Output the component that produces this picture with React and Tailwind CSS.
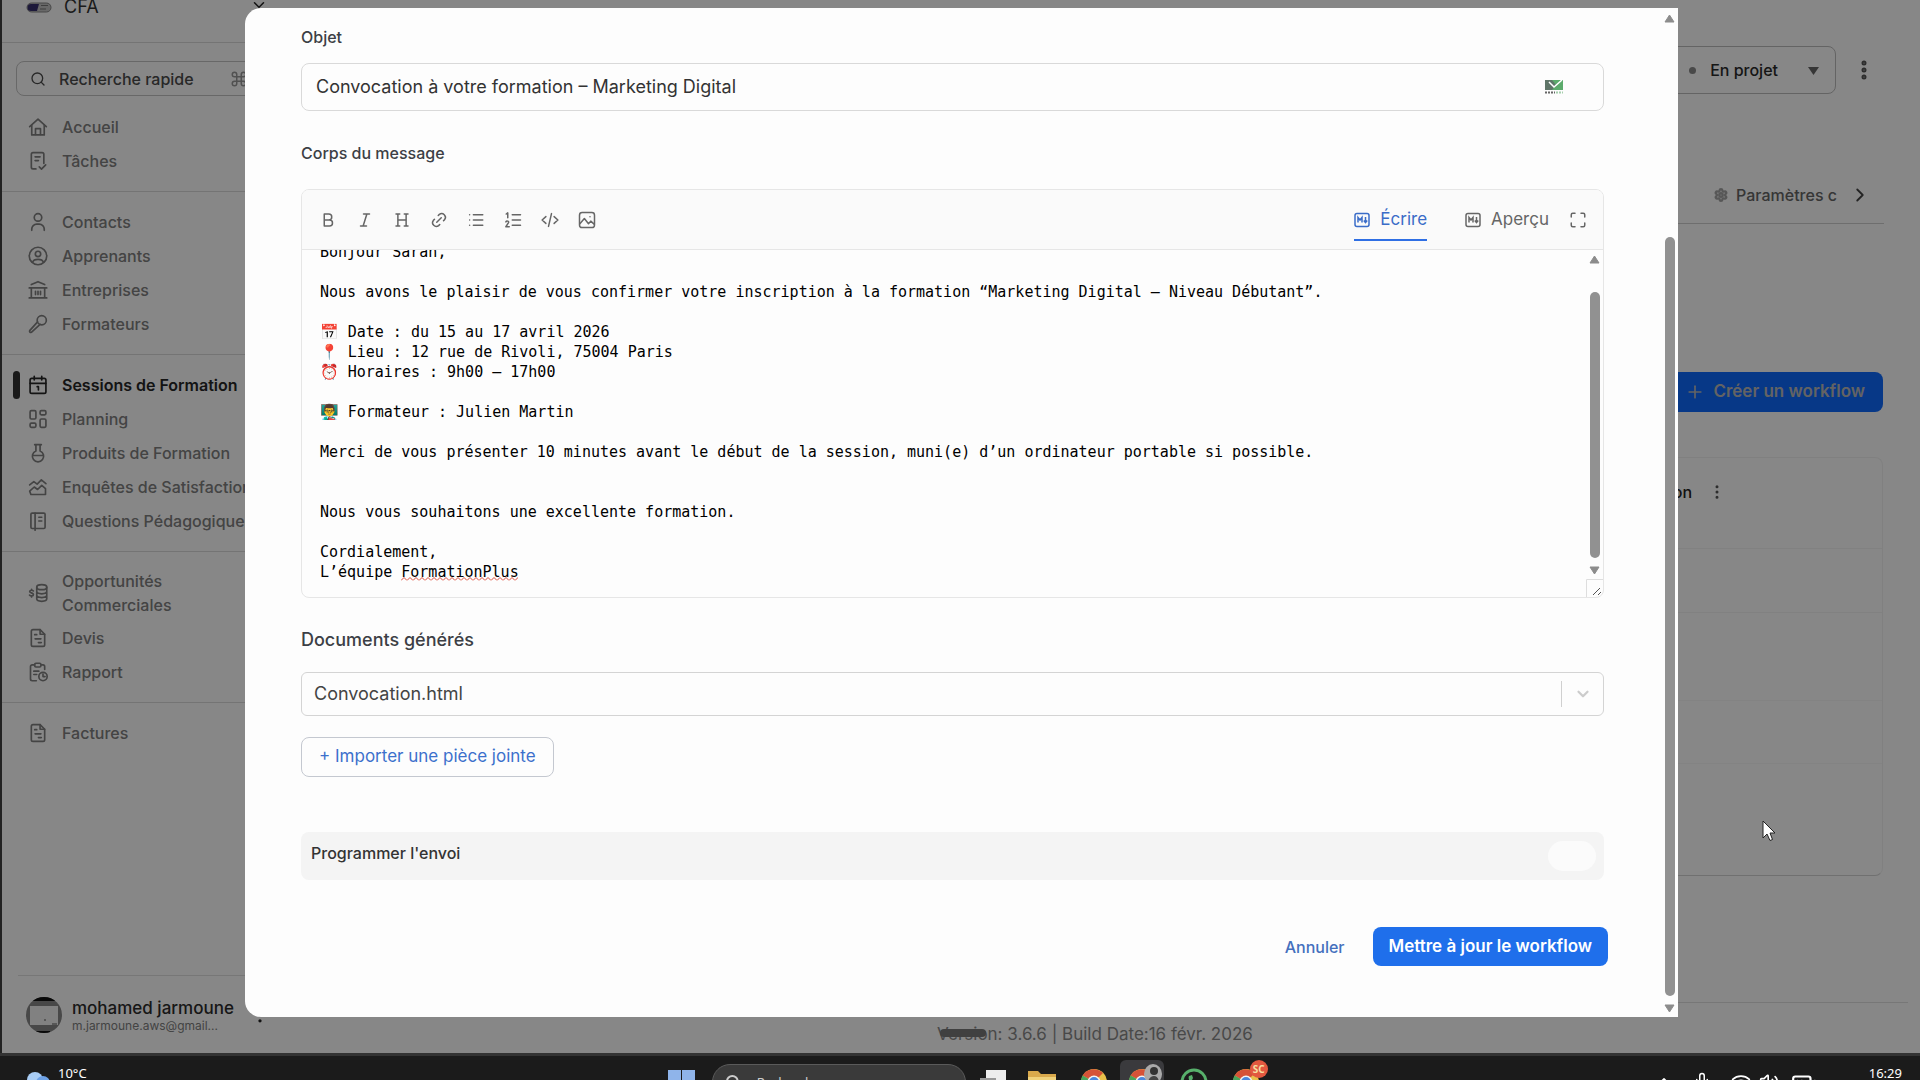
import { useLayoutEffect, useRef } from "react";
import {
  Search, Command, ChevronDown, ChevronRight, EllipsisVertical, Plus, Settings,
  Maximize, Mic, Wifi, Volume2, BatteryMedium, ChevronUp,
} from "lucide-react";

/* ---------- sidebar icons ---------- */

function Icon({ children, size = 20, stroke = 2 }) {
  return (
    <svg width={size} height={size} viewBox="0 0 24 24" fill="none" stroke="currentColor" strokeWidth={stroke} strokeLinecap="round" strokeLinejoin="round" aria-hidden="true">
      {children}
    </svg>
  );
}

const HomeIcon = () => (
  <Icon>
    <path d="M2 11.5 12 2.5l10 9" />
    <path d="M4.5 10v11.5h15V10" />
    <path d="M9 21v-7h6v7" />
  </Icon>
);
const TaskIcon = () => (
  <Icon>
    <path d="M9.5 21.5H6a2 2 0 0 1-2-2V4a2 2 0 0 1 2-2h11a2 2 0 0 1 2 2v11" />
    <path d="M8.5 7h6M8.5 11.5h4M13.5 19l2.7 2.7 5-5" />
  </Icon>
);
const ContactIcon = () => (
  <Icon>
    <circle cx="12" cy="6.5" r="4.5" />
    <path d="M4.5 22v-1.5a6 6 0 0 1 6-6h3a6 6 0 0 1 6 6V22" />
  </Icon>
);
const LearnerIcon = () => (
  <Icon>
    <circle cx="12" cy="12" r="10.5" />
    <circle cx="12" cy="9.5" r="3.2" />
    <path d="M5.5 19.5c1-3 3.5-3.5 6.5-3.5s5.5.5 6.500 3.5" />
  </Icon>
);
const CompanyIcon = () => (
  <Icon>
    <path d="M4 5.5 12 2l8 3.5" />
    <path d="M1.5 9.5h21M4 9.5v12h16v-12M1.5 21.5h21M9 13.5v4M12 13.5v4M15 13.5v4" />
  </Icon>
);
const MicIcon = () => (
  <Icon>
    <circle cx="16.5" cy="7.5" r="5.5" />
    <path d="M11.5 9.5 2 20a1.5 1.5 0 0 0 2 2l10.5-9.5" />
  </Icon>
);
const SessionIcon = () => (
  <Icon>
    <rect x="2.5" y="4" width="19" height="18" rx="2" />
    <path d="M2.5 10h19M7.5 1.5V6M16.5 1.5V6M11 14h1.5v4" />
  </Icon>
);
const PlanningIcon = () => (
  <Icon>
    <rect x="2.5" y="2" width="7" height="10" rx="1.5" />
    <rect x="14.5" y="2" width="7" height="5" rx="1.5" />
    <rect x="14.5" y="12" width="7" height="10" rx="1.5" />
    <rect x="2.5" y="17" width="7" height="5" rx="1.5" />
  </Icon>
);
const FlaskIcon = () => (
  <Icon>
    <path d="M8 2h8M9.5 2v7.5a6.8 6.8 0 1 0 5 0V2M5.5 15h13" />
  </Icon>
);
const SurveyIcon = () => (
  <Icon>
    <path d="m2 9.5 5-4 4 3 5-5 5.5 4.5" />
    <path d="m2 17 5.5-5 4 3 5-5 4.5 4v7H3.5z" />
  </Icon>
);
const BookIcon = () => (
  <Icon>
    <rect x="3.5" y="2.5" width="17" height="18.5" rx="1.5" />
    <path d="M8.5 2.5V23M13 7.5h3.5M13 12h3.5" />
  </Icon>
);
const MoneyIcon = () => (
  <Icon>
    <path d="M6.5 9.5c-1-1.2-4.5-1.2-4.5.8s4.5 1.2 4.5 3.5-3.5 2.2-4.7.7M4.3 7.5v1.2M4.3 15.5v1.2" />
    <ellipse cx="16.5" cy="5" rx="6" ry="3" />
    <path d="M10.5 5v14c0 1.7 2.7 3 6 3s6-1.3 6-3V5M10.5 10c0 1.7 2.7 3 6 3s6-1.3 6-3M10.5 14.5c0 1.7 2.7 3 6 3s6-1.3 6-3" />
  </Icon>
);
const InvoiceIcon = () => (
  <Icon>
    <path d="M14.5 2H6a2 2 0 0 0-2 2v16a2 2 0 0 0 2 2h12a2 2 0 0 0 2-2V7.5z" />
    <path d="M14.5 2v5.5H20M8 8h2.5M8.5 13h7M12.5 17.5h3.5" />
  </Icon>
);
const ReportIcon = () => (
  <Icon>
    <path d="M8 3.5H5a2 2 0 0 0-2 2v15a2 2 0 0 0 2 2h5M16 3.5h2a2 2 0 0 1 2 2V9" />
    <rect x="8" y="1.5" width="7.5" height="4.5" rx="1.5" />
    <path d="M7 11h6M7 15h3.5" />
    <circle cx="18" cy="17.5" r="5" />
    <path d="M18 14.5v3h2.5" />
  </Icon>
);

const NAV = [
  [["Accueil", HomeIcon], ["Tâches", TaskIcon]],
  [["Contacts", ContactIcon], ["Apprenants", LearnerIcon], ["Entreprises", CompanyIcon], ["Formateurs", MicIcon]],
  [["Sessions de Formation", SessionIcon], ["Planning", PlanningIcon], ["Produits de Formation", FlaskIcon], ["Enquêtes de Satisfaction", SurveyIcon], ["Questions Pédagogiques", BookIcon]],
  [["Opportunités Commerciales", MoneyIcon], ["Devis", InvoiceIcon], ["Rapport", ReportIcon]],
  [["Factures", InvoiceIcon]],
];

function NavItem({ label, Glyph }) {
  const active = label === "Sessions de Formation";
  const tall = label === "Opportunités Commerciales";
  return (
    <a href="#" aria-current={active ? "page" : undefined} className={"relative flex items-center pl-[26px] " + (tall ? "h-14 " : "h-[34px] ") + (active ? "font-semibold text-[#262626]" : "font-medium text-[#808080]")}>
      {active && <span className="absolute left-[11px] h-7 w-[7px] rounded-full bg-[#303030]" />}
      <span className="w-[34px] shrink-0"><Glyph /></span>
      <span className={tall ? "w-32 leading-6" : "whitespace-nowrap"}>{label}</span>
    </a>
  );
}

function Sidebar() {
  return (
    <aside className="flex w-[280px] shrink-0 flex-col overflow-hidden text-base text-[#808080]">
      <div className="flex h-[43px] shrink-0 items-start border-b border-[#dcdcdc] pl-6">
        <svg width="26" height="12" viewBox="0 0 26 12" className="mt-0.5" aria-hidden="true">
          <rect x="1" y="1" width="24" height="9" rx="4.5" fill="#c4c4c4" stroke="#888" />
          <path d="M5 2h8l-2 7H5a3.5 3.5 0 0 1 0-7z" fill="#38306e" />
          <path d="M15 3.5h7M14 7h6" stroke="#777" />
        </svg>
        <span className="-mt-[5px] ml-3 flex-1 text-lg leading-6 text-[#333]">CFA</span>
        <ChevronDown size={18} className="-mt-1 mr-3.5 text-[#222]" />
      </div>
      <button type="button" className="mx-3.5 mt-[18px] flex h-[35px] shrink-0 items-center rounded-lg border border-[#c4c4c4] pl-[13px] font-medium text-[#4c4c4c]">
        <Search size={16} />
        <span className="ml-[13px] flex-1 text-left">Recherche rapide</span>
        <Command size={18} className="mr-1 text-[#999]" /><span className="mr-1 text-[#999]">K</span>
      </button>
      <nav className="pt-px">
        {NAV.map((items, i) => (
          <div key={i} className="border-b border-[#dcdcdc] py-[13px] last:border-0">
            {items.map(([label, Glyph]) => <NavItem key={label} label={label} Glyph={Glyph} />)}
          </div>
        ))}
      </nav>
      <div className="mx-4 mt-auto flex h-[78px] shrink-0 items-center border-t border-[#e0e0e0] pl-2">
        <svg width="36" height="36" viewBox="0 0 36 36" aria-hidden="true">
          <clipPath id="avatar"><circle cx="18" cy="18" r="18" /></clipPath>
          <g clipPath="url(#avatar)">
            <rect width="36" height="36" fill="#888" />
            <path d="M0 0h36v4H0zM10 34h14v2H10z" fill="#111" />
            <path d="M4 9h28v19H4z" fill="#f4f4f4" />
            <path d="M26 27h5M18 23h2" stroke="#555" />
          </g>
        </svg>
        <span className="ml-2.5 flex flex-1 flex-col pt-0.5">
          <span className="text-[17px] leading-5 font-medium text-[#2c2c2c]">mohamed jarmoune</span>
          <span className="text-xs leading-4">m.jarmoune.aws@gmail...</span>
        </span>
        <EllipsisVertical size={20} className="-mr-1 text-[#222]" />
      </div>
    </aside>
  );
}

/* ---------- page behind the dialog ---------- */

function Page() {
  return (
    <main className="flex min-w-0 flex-1 flex-col text-base">
      <div className="flex items-center justify-end pt-[46px] pr-11">
        <button type="button" className="flex h-12 w-64 items-center rounded-lg border border-[#bdbdbd] pr-4 font-medium text-[#2a2a2a]">
          <span className="ml-auto size-[7px] rounded-full bg-[#8a8a8a]" />
          <span className="ml-3.5">En projet</span>
          <svg width="11" height="8" viewBox="0 0 11 8" className="mt-0.5 ml-[30px]" fill="#666" aria-hidden="true"><path d="M0 0h11L5.5 8z" /></svg>
        </button>
        <button type="button" aria-label="Plus d'actions" className="ml-4 text-[#555]"><EllipsisVertical size={24} strokeWidth={3} /></button>
      </div>
      <div className="mt-[73px] mr-9 flex h-[57px] items-center justify-end border-b border-[#d0d0d0] pr-[13px] font-medium text-[#666]">
        <Settings size={14} className="text-[#a5a5a5]" strokeWidth={4} />
        <span className="ml-2 whitespace-nowrap">Paramètres c</span>
        <ChevronRight size={22} strokeWidth={2} className="ml-3 text-[#444]" />
      </div>
      <button type="button" className="mt-[148px] mr-[37px] flex h-10 items-center self-end rounded-lg bg-[#0f6bff] pr-[18px] pl-5 text-[17px] font-semibold text-[#bbb]">
        <Plus size={20} strokeWidth={2} />
        <span className="ml-2">Créer un workflow</span>
      </button>
      <section className="mt-[45px] mr-[37px] ml-8 h-[419px] rounded-lg border border-[#f2f2f2] border-b-[#d4d4d4]">
        <div className="flex h-[67px] items-center justify-end pr-[156px]">
          <span className="font-medium text-[#222]">Action</span>
          <EllipsisVertical size={18} strokeWidth={2} className="ml-4 text-[#555]" />
        </div>
        <div className="h-[24px] border-b border-[#f4f4f4]" />
        <div className="h-[64px] border-b border-[#f4f4f4]" />
        <div className="h-[88px] border-b border-[#f8f8f8]" />
        <div className="h-[63px] border-b border-[#f8f8f8]" />
      </section>
      <footer className="mt-auto mr-3 h-[51px] border-t border-[#e0e0e0] pt-[19px] text-center text-[17px] leading-6 text-[#8a8a8a]">
        <span>Version: 3.6.6 | Build Date:16 févr. 2026</span>
      </footer>
    </main>
  );
}

/* ---------- message editor ---------- */

const MESSAGE = `Bonjour Sarah,

Nous avons le plaisir de vous confirmer votre inscription à la formation “Marketing Digital – Niveau Débutant”.

📅 Date : du 15 au 17 avril 2026
📍 Lieu : 12 rue de Rivoli, 75004 Paris
⏰ Horaires : 9h00 – 17h00

👨‍🏫 Formateur : Julien Martin

Merci de vous présenter 10 minutes avant le début de la session, muni(e) d’un ordinateur portable si possible.


Nous vous souhaitons une excellente formation.

Cordialement,
L’équipe FormationPlus`;

const TOOLS = [
  ["Gras", <path key="a" d="M7 4h6a4 4 0 0 1 0 8H7zm0 8h7a4 4 0 0 1 0 8H7z" />],
  ["Italique", <path key="a" d="M10 4h8M6 20h8M14.5 4l-5 16" />],
  ["Titre", <path key="a" d="M6.5 4v16M17.5 4v16M6.5 12h11M4 4h5M15 4h5M4 20h5M15 20h5" />],
  ["Lien", <path key="a" d="m9 15 6-6M11 6l1.5-1.5a5 5 0 0 1 7 7L18 13M6 11l-1.5 1.5a5 5 0 0 0 7 7L13 18" />],
  ["Liste à puces", <path key="a" d="M8.5 5H21M8.5 12H21M8.5 19H21M3.5 5h.01M3.5 12h.01M3.5 19h.01" />],
  ["Liste numérotée", <path key="a" d="M11 5h11M11 12h11M11 19h11M3 4l2-1.5V9M2.5 14.5c1-2 4.5-1 3.5 1L2.5 21H7" />],
  ["Code", <path key="a" d="m6.5 7.5-5 4.5 5 4.5M17.5 7.5l5 4.5-5 4.5M14 3.5l-4 17" />],
  ["Image", <g key="a"><rect x="2" y="2" width="20" height="20" rx="3.5" /><path d="m2.5 17 6-7 5.5 7 3-3.5 4.5 4M16 7.5h.01" /></g>],
];

const MarkdownIcon = () => (
  <svg width="16" height="16" viewBox="0 0 16 16" fill="none" stroke="currentColor" strokeWidth="1.5" aria-hidden="true">
    <rect x="1" y="1.5" width="14" height="13" rx="2" />
    <path d="M4 10.5v-5l2 2.5 2-2.5v5M11.5 5v5M9.8 8.5l1.7 2 1.7-2" />
  </svg>
);

function Arrow({ down }) {
  return (
    <svg width="11" height="9" viewBox="0 0 11 9" fill="#8c8c8c" stroke="#8c8c8c" strokeLinejoin="round" className="shrink-0" aria-hidden="true">
      <path d={down ? "M1 1h9L5.5 8z" : "M1 8h9L5.5 1z"} />
    </svg>
  );
}

function Editor() {
  const area = useRef(null);
  useLayoutEffect(() => {
    area.current.scrollTop = area.current.scrollHeight;
  }, []);
  return (
    <div className="mt-[26px] overflow-hidden rounded-lg border border-[#e6e6e6]">
      <div className="flex h-[60px] items-center border-b border-[#e6e6e6] bg-[#fafafa] px-4 text-[#666]">
        <div className="flex gap-[17px]">
          {TOOLS.map(([label, shape]) => (
            <button key={label} type="button" aria-label={label} className="flex size-5 items-center justify-center"><Icon size={18}>{shape}</Icon></button>
          ))}
        </div>
        <div className="ml-auto flex items-center text-[17px]">
          <button type="button" className="flex h-[42px] items-center gap-2.5 border-b-2 border-[#2f6fe4] pt-0.5 text-[#3a6cc8]"><MarkdownIcon />Écrire</button>
          <button type="button" className="ml-[38px] flex h-[42px] items-center gap-2.5 border-b-2 border-transparent pt-0.5"><MarkdownIcon />Aperçu</button>
          <button type="button" aria-label="Plein écran" className="ml-5"><Maximize size={18} /></button>
        </div>
      </div>
      <div className="relative flex h-[347px]">
        <textarea
          ref={area}
          aria-labelledby="body-label"
          spellCheck={false}
          defaultValue={MESSAGE}
          className="h-full flex-1 resize-none overflow-hidden bg-transparent px-[18px] pt-4 pb-[15px] font-['DejaVu_Sans_Mono','Noto_Color_Emoji',monospace] text-[15px] leading-5 text-black outline-none"
        />
        <svg width="117" height="4" className="absolute bottom-4 left-[99px]" aria-hidden="true">
          <defs><pattern id="wave" width="6" height="4" patternUnits="userSpaceOnUse"><path d="M0 3.5 3 .5l3 3" fill="none" stroke="#dc4a38" /></pattern></defs>
          <rect width="117" height="4" fill="url(#wave)" />
        </svg>
        <div className="flex w-[17px] flex-col items-center pt-[5px]">
          <Arrow />
          <div className="mt-7 w-2.5 flex-1 rounded-full bg-[#919191]" />
          <div className="mt-2 flex"><Arrow down /></div>
          <svg width="17" height="18" viewBox="0 0 17 18" className="mt-1 shrink-0" fill="none" aria-hidden="true">
            <path d="M.5 18V.5H17" stroke="#dedede" />
            <path d="m7 16 7-7M12 16l3-3" stroke="#555" />
          </svg>
        </div>
      </div>
    </div>
  );
}

/* ---------- dialog ---------- */

function Dialog() {
  return (
    <div role="dialog" aria-label="Modifier le workflow" className="flex w-full overflow-hidden rounded-l-2xl bg-[#fdfdfd]">
      <form className="min-w-0 flex-1 pt-[19px] pr-[57px] pb-12 pl-14" onSubmit={(e) => e.preventDefault()}>
        <label htmlFor="subject" className="block text-base leading-5 font-medium text-[#3c3f45]">Objet</label>
        <div className="relative mt-4">
          <input id="subject" type="text" defaultValue="Convocation à votre formation – Marketing Digital" className="h-12 w-full rounded-lg border border-[#d9d9d9] bg-transparent pr-16 pb-0.5 pl-3.5 text-lg text-[#333] outline-none" />
          <svg width="18" height="15" viewBox="0 0 18 15" className="absolute top-[17px] right-[41px]" aria-hidden="true">
            <path d="M0 0h18v10H0z" fill="#5cab6c" />
            <path d="M0 0h7l4 5-4 5H0z" fill="#5f7568" />
            <path d="m4 2 5 5 8-7" fill="none" stroke="#fff" strokeWidth="1.5" />
            <path d="M0 12.5h10" stroke="#666" strokeDasharray="2 1" strokeWidth="2" />
            <path d="M11 12.5h7" stroke="#a4cfac" strokeDasharray="2 1" strokeWidth="2" />
          </svg>
        </div>
        <div id="body-label" className="mt-8 text-base leading-5 font-medium text-[#3c3f45]">Corps du message</div>
        <Editor />
        <label htmlFor="document" className="mt-[30px] block text-lg leading-6 font-medium text-[#3c3f45]">Documents générés</label>
        <div className="relative mt-5">
          <select id="document" className="h-11 w-full appearance-none rounded-md border border-[#d4d4d4] bg-transparent pl-3 text-lg text-[#444] outline-none">
            <option>Convocation.html</option>
          </select>
          <span className="pointer-events-none absolute inset-y-[9px] right-0 flex w-[43px] items-center justify-center border-l border-[#d0d0d0] text-[#ccc]">
            <ChevronDown size={18} strokeWidth={3} />
          </span>
        </div>
        <button type="button" className="mt-[21px] flex h-10 items-center rounded-lg border border-[#c4c8d0] px-[17px] text-[17px] text-[#3c70cc]">+ Importer une pièce jointe</button>
        <div className="mt-[55px] flex h-12 items-center justify-between rounded-lg bg-[#f4f4f4] pr-2 pl-2.5">
          <label htmlFor="schedule" className="pb-1.5 text-base leading-5 font-medium text-[#333]">Programmer l'envoi</label>
          <input id="schedule" type="checkbox" role="switch" className="h-[30px] w-12 appearance-none rounded-full bg-[#fbfbfb]" />
        </div>
        <div className="mt-[47px] -mr-1 flex items-center justify-end">
          <button type="button" className="px-7 text-base font-medium text-[#4470bd]">Annuler</button>
          <button type="submit" className="h-[39px] rounded-lg bg-[#1f6feb] px-4 text-[17px] font-semibold text-white">Mettre à jour le workflow</button>
        </div>
      </form>
      <div className="flex w-[17px] flex-col items-center pt-[6px] pb-1" aria-hidden="true">
        <Arrow />
        <div className="mt-[214px] w-2.5 flex-1 rounded-full bg-[#919191]" />
        <div className="mt-2"><Arrow down /></div>
      </div>
    </div>
  );
}

/* ---------- taskbar ---------- */

const Chrome = () => (
  <svg width="28" height="28" viewBox="0 0 28 28" aria-hidden="true">
    <circle cx="14" cy="14" r="13" fill="#e9c04a" />
    <path d="M14 14 2.7 7.500A13 13 0 0 1 23 5z" fill="#d65238" />
    <path d="M14 14 2.7 7.500A13 13 0 0 0 14 27z" fill="#4aa35c" />
    <circle cx="14" cy="14" r="6.5" fill="#f4f4f4" />
    <circle cx="14" cy="14" r="5" fill="#4b86dd" />
  </svg>
);

function Taskbar() {
  return (
    <footer className="relative z-20 h-[27px] shrink-0 overflow-hidden border-t-[3px] border-[#333] bg-[#1b1b1b] text-white">
      <div className="flex h-14 items-start pr-[18px] pl-[26px] font-['Noto_Sans',sans-serif] text-[13px] leading-4">
        <svg width="24" height="20" viewBox="0 0 24 20" className="mt-[15px]" aria-hidden="true">
          <circle cx="9" cy="9" r="8" fill="#a9cdf5" /><circle cx="17" cy="12" r="7" fill="#6ea2e6" />
        </svg>
        <span className="mt-[9px] ml-2 whitespace-nowrap">10°C</span>
        <div className="mx-auto flex items-start pl-[186px]">
          <svg width="28" height="28" viewBox="0 0 28 28" className="mt-3.5" fill="#8fb4ea" aria-hidden="true"><path d="M0 0h13v13H0zM14 0h13v13H14zM0 14h13v13H0zM14 14h13v13H14z" /></svg>
          <button type="button" className="mt-2 ml-4 flex h-9 w-[254px] items-center gap-4 rounded-full border border-[#5a5a5a] bg-[#3a3a3a] pl-3 text-[#ccc]"><Search size={16} strokeWidth={3} />Rechercher</button>
          <svg width="28" height="28" viewBox="0 0 28 28" className="mt-3.5 ml-3.5" aria-hidden="true"><path d="M6 0h20v18H6z" fill="#eee" /><path d="M0 8h16v18H0z" fill="#999" /></svg>
          <svg width="28" height="24" viewBox="0 0 28 24" className="mt-[15px] ml-5" aria-hidden="true"><path d="M0 0h10l3 3h15v21H0z" fill="#d9a94c" /><path d="M0 6h28v18H0z" fill="#f0d27c" /></svg>
          <span className="mt-3 ml-6"><Chrome /></span>
          <span className="relative mt-1 ml-3 h-11 w-11 rounded-md bg-[#3a3a3d] pt-2 pl-2"><Chrome />
            <svg width="18" height="20" viewBox="0 0 18 20" className="absolute top-1 right-0.5" aria-hidden="true"><ellipse cx="9" cy="10" rx="9" ry="10" fill="#aaa" /><circle cx="10" cy="7" r="4" fill="#333" /><path d="M4 20c0-6 3-8 6-8s5 2 5 8z" fill="#444" /></svg>
          </span>
          <svg width="28" height="28" viewBox="0 0 28 28" className="mt-3 ml-4" fill="none" aria-hidden="true"><circle cx="14" cy="14" r="12" stroke="#57b06b" strokeWidth="3" /><path d="M9 8c-2 4 4 11 10 11l1-3-3-2-2 1-3-3 1-2-1-3z" fill="#57b06b" /></svg>
          <span className="relative mt-3 ml-6"><Chrome />
            <span className="absolute -top-2 -right-2 size-[18px] rounded-full bg-[#e2583f] text-center text-[10px] leading-[18px] font-bold text-[#f5dda0]">SC</span>
          </span>
        </div>
        <div className="flex items-start gap-2">
          <ChevronUp size={18} className="mt-4" />
          <Mic size={18} className="mt-4 ml-3 mr-3" />
          <Wifi size={20} className="mt-4" />
          <Volume2 size={20} className="mt-4" />
          <BatteryMedium size={26} className="mt-3.5 ml-1" />
          <span className="mt-[9px] ml-11">16:29</span>
        </div>
      </div>
    </footer>
  );
}

export default function App() {
  return (
    <div className="flex h-screen flex-col overflow-hidden bg-[#222] font-['Inter',sans-serif]">
      <div className="relative ml-0.5 flex min-h-0 flex-1 bg-white">
        <Sidebar />
        <Page />
        <div className="absolute inset-0 bg-black/47" />
        <div className="absolute top-2 right-[242px] bottom-9 left-[243px] flex">
          <Dialog />
        </div>
        <div className="absolute bottom-4 left-1/2 h-2 w-[46px] -translate-x-[21px] rounded-full bg-[#404040]" />
        <svg width="14" height="22" viewBox="0 0 14 22" className="absolute top-[820px] right-[144px]" aria-hidden="true">
          <path d="M1 1v17l4-4 3 6.5 2.500-1L8 13h5z" fill="#fff" stroke="#222" />
        </svg>
      </div>
      <Taskbar />
    </div>
  );
}
